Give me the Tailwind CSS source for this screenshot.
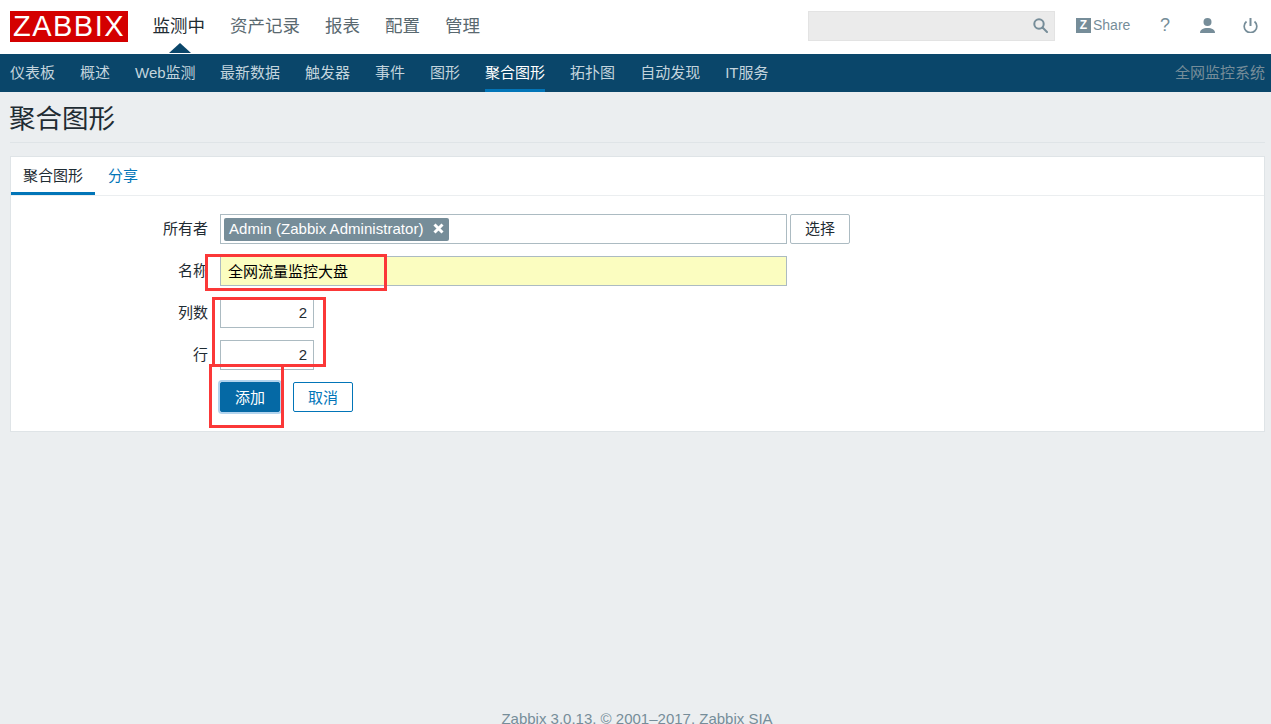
<!DOCTYPE html>
<html lang="zh-CN">
<head>
  <meta charset="UTF-8">
  <title>聚合图形</title>
  <script src="https://cdn.jsdelivr.net/npm/@tailwindcss/browser@4"></script>
</head>
<body class="h-[724px] w-[1271px] overflow-hidden bg-[#ebeef0] text-[15px] text-[#1f2c33] font-['Liberation_Sans','Noto_Sans_CJK_SC',sans-serif]">
  <!-- top menu -->
  <header class="flex h-[54px] items-start bg-white pl-[10px] pt-[11px]">
    <div class="flex h-[31px] w-[118px] items-center justify-center bg-[#d40000] text-[29px] leading-none text-white tracking-[1.5px]">ZABBIX</div>
    <nav class="ml-[24.5px] flex h-[30px] items-center gap-[25px] text-[17.5px] text-[#5a6970]">
      <a class="relative text-[#1f2c33]">监测中
        <span class="absolute left-[16px] top-[30px] h-0 w-0 border-x-[11px] border-b-[10px] border-x-transparent border-b-[#0a466a]"></span>
      </a>
      <a>资产记录</a>
      <a>报表</a>
      <a>配置</a>
      <a>管理</a>
    </nav>
    <div class="ml-auto flex h-[30px] items-center pr-[13px]">
      <div class="flex h-[30px] w-[247px] items-center justify-end border border-[#e3e3e3] bg-[#ebebeb] pr-[6px]">
        <svg class="mb-[1px]" width="15" height="15" viewBox="0 0 15 15" fill="none" stroke="#768d99" stroke-width="2"><circle cx="6" cy="6" r="4.7"/><path d="M9.500 9.500l4.500 4.500" stroke-linecap="round"/></svg>
      </div>
      <div class="flex h-[30px] items-center pb-[2px]">
        <div class="ml-[21px] flex h-[15px] w-[15px] items-center justify-center bg-[#768d99] text-[12px] font-bold leading-none text-white">Z</div>
        <span class="ml-[2px] w-[37px] text-[14px] text-[#768d99]">Share</span>
        <span class="ml-[30px] w-[10px] text-center text-[18px] text-[#768d99]">?</span>
        <svg class="ml-[30px]" width="15" height="15" viewBox="0 0 15 15" fill="#768d99"><circle cx="7.500" cy="4" r="4"/><path d="M0 15c0-3.500 3-5 7.500-5s7.500 1.500 7.500 5z"/></svg>
        <svg class="ml-[28px]" width="15" height="15" viewBox="0 0 15 15" fill="none" stroke="#768d99" stroke-width="2"><path d="M7.500 0v8"/><path d="M3.500 3.500a6.300 6.300 0 1 0 8 0" stroke-width="1.700"/></svg>
      </div>
    </div>
  </header>

  <!-- sub menu -->
  <nav class="flex h-[38px] items-center gap-[25px] bg-[#0a466a] pl-[10px] pr-[6px] text-[#c3d4dd]">
    <a>仪表板</a>
    <a>概述</a>
    <a class="w-[60px] whitespace-nowrap">Web监测</a>
    <a>最新数据</a>
    <a>触发器</a>
    <a>事件</a>
    <a>图形</a>
    <a class="flex h-[38px] items-center border-b-[3px] border-[#0275b8] pt-[3px] text-white">聚合图形</a>
    <a>拓扑图</a>
    <a>自动发现</a>
    <a>IT服务</a>
    <span class="ml-auto text-[#768d99]">全网监控系统</span>
  </nav>

  <main class="pl-[10px] pr-[6px]">
    <h1 class="flex h-[51px] items-center border-b border-[#dfe4e7] pt-[6px] text-[26.5px] font-normal"><span class="-ml-[1px]">聚合图形</span></h1>

    <div class="mt-[13px] h-[276px] border border-[#dfe4e7] bg-white">
      <div class="flex h-[39px] border-b border-[#ebeef0]">
        <div class="flex h-[38px] w-[84px] items-center justify-center border-b-[3px] border-[#0275b8] pt-[3px]">聚合图形</div>
        <div class="flex h-[38px] items-center pl-[13px] text-[#0275b8]">分享</div>
      </div>

      <form class="mt-[18px] flex flex-col gap-[12px]">
        <div class="flex h-[30px] items-center">
          <label class="w-[197px] text-right">所有者</label>
          <div class="ml-[12px] flex h-[30px] w-[567px] items-center border border-[#acbbc2] bg-white pl-[3px]">
            <span class="flex h-[23px] items-center gap-[9px] rounded-[2px] bg-[#768d99] pl-[5px] pr-[5px] text-white">
              <span class="w-[195px] whitespace-nowrap tracking-[0.04px]">Admin (Zabbix Administrator)</span>
              <svg width="11" height="12" viewBox="0 0 11 12" stroke="#fff" stroke-width="3"><path d="M1.500 1.500l8 8M9.500 1.500l-8 8"/></svg>
            </span>
          </div>
          <button type="button" class="ml-[3px] h-[30px] w-[60px] rounded-[2px] border border-[#acbbc2] bg-white">选择</button>
        </div>
        <div class="flex h-[30px] items-center">
          <label class="w-[197px] text-right">名称</label>
          <div class="ml-[12px] flex h-[30px] w-[567px] items-center border border-[#acbbc2] bg-[#fbfdc0] pl-[7px] pt-[2px] text-black">全网流量监控大盘</div>
        </div>
        <div class="flex h-[30px] items-center">
          <label class="w-[197px] text-right">列数</label>
          <div class="ml-[12px] flex h-[30px] w-[94px] items-center justify-end border border-[#acbbc2] pr-[6px]">2</div>
        </div>
        <div class="flex h-[30px] items-center">
          <label class="w-[197px] text-right">行</label>
          <div class="ml-[12px] flex h-[30px] w-[94px] items-center justify-end border border-[#acbbc2] pr-[6px]">2</div>
        </div>
        <div class="ml-[209px] flex h-[30px] items-center gap-[13px]">
          <button type="button" class="h-[30px] w-[60px] rounded-[2px] border border-[#0569a5] bg-[#0569a5] pt-[2px] text-white shadow-[0_0_0_2px_#b3d4ee]">添加</button>
          <button type="button" class="h-[30px] w-[60px] rounded-[2px] border border-[#0275b8] bg-white pt-[2px] text-[#0275b8]">取消</button>
        </div>
      </form>
    </div>
  </main>

  <footer class="mt-[276px] pl-[3px] text-center text-[15px] text-[#768d99]">Zabbix 3.0.13. © 2001–2017. Zabbix SIA</footer>

  <!-- red annotations drawn over the screenshot -->
  <div class="absolute left-[205px] top-[254px] h-[37px] w-[182px] border-[3px] border-[#fb3838]"></div>
  <div class="absolute left-[212px] top-[297px] h-[70px] w-[114px] border-[3px] border-[#fb3838]"></div>
  <div class="absolute left-[209px] top-[364px] h-[64px] w-[75px] border-[3px] border-[#fb3838]"></div>
</body>
</html>
